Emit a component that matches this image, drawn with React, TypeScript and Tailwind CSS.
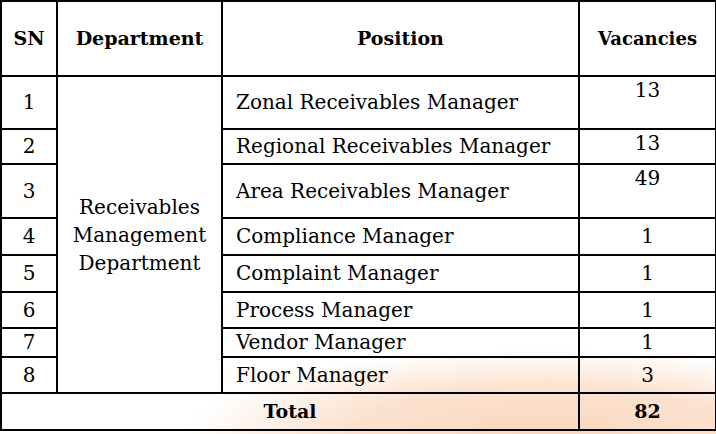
import React from "react";

type Row = { sn: string; pos: string; vac: string; h: number; top?: boolean };

const rows: Row[] = [
  { sn: "1", pos: "Zonal Receivables Manager", vac: "13", h: 53, top: true },
  { sn: "2", pos: "Regional Receivables Manager", vac: "13", h: 35, top: true },
  { sn: "3", pos: "Area Receivables Manager", vac: "49", h: 54, top: true },
  { sn: "4", pos: "Compliance Manager", vac: "1", h: 37 },
  { sn: "5", pos: "Complaint Manager", vac: "1", h: 37 },
  { sn: "6", pos: "Process Manager", vac: "1", h: 36 },
  { sn: "7", pos: "Vendor Manager", vac: "1", h: 29 },
  { sn: "8", pos: "Floor Manager", vac: "3", h: 36 },
];

export default function App() {
  const font = { fontFamily: '"DejaVu Serif", "Liberation Serif", serif' };
  return (
    <div
      className="relative w-[716px] h-[434px] bg-white overflow-hidden text-black text-[20px] leading-[23px]"
      style={font}
    >
      <div className="absolute left-[100px] top-[330px] right-0 bottom-0 bg-[radial-gradient(ellipse_360px_85px_at_72%_100%,#f8d8be_0%,#fbe2cf_55%,rgba(255,255,255,0)_100%)]" />
      <table className="relative border-collapse table-fixed w-[715px]">
        <colgroup>
          <col className="w-[56px]" />
          <col className="w-[165px]" />
          <col className="w-[357px]" />
          <col className="w-[137px]" />
        </colgroup>
        <tbody>
          <tr className="h-[75px]">
            <th className="border-2 border-black font-bold text-[19px] text-center align-middle">SN</th>
            <th className="border-2 border-black font-bold text-[19px] text-center align-middle">Department</th>
            <th className="border-2 border-black font-bold text-[19px] text-center align-middle">Position</th>
            <th className="border-2 border-black font-bold text-[18px] text-center align-middle">Vacancies</th>
          </tr>
          {rows.map((r, i) => (
            <tr key={r.sn} style={{ height: r.h }}>
              <td className="border-2 border-black text-center align-middle p-0">{r.sn}</td>
              {i === 0 && (
                <td rowSpan={8} className="border-2 border-black text-center align-middle leading-[28px] p-0">
                  Receivables
                  <br />
                  Management
                  <br />
                  Department
                </td>
              )}
              <td className="border-2 border-black text-left align-middle pl-[13px] p-0">{r.pos}</td>
              <td
                className={
                  "border-2 border-black text-center p-0 " +
                  (r.top ? "align-top pt-[2px]" : "align-middle")
                }
              >
                {r.vac}
              </td>
            </tr>
          ))}
          <tr className="h-[37px]">
            <td colSpan={3} className="border-2 border-black text-center align-middle font-bold text-[19px] p-0">
              Total
            </td>
            <td className="border-2 border-black text-center align-middle font-bold text-[19px] p-0">82</td>
          </tr>
        </tbody>
      </table>
    </div>
  );
}
